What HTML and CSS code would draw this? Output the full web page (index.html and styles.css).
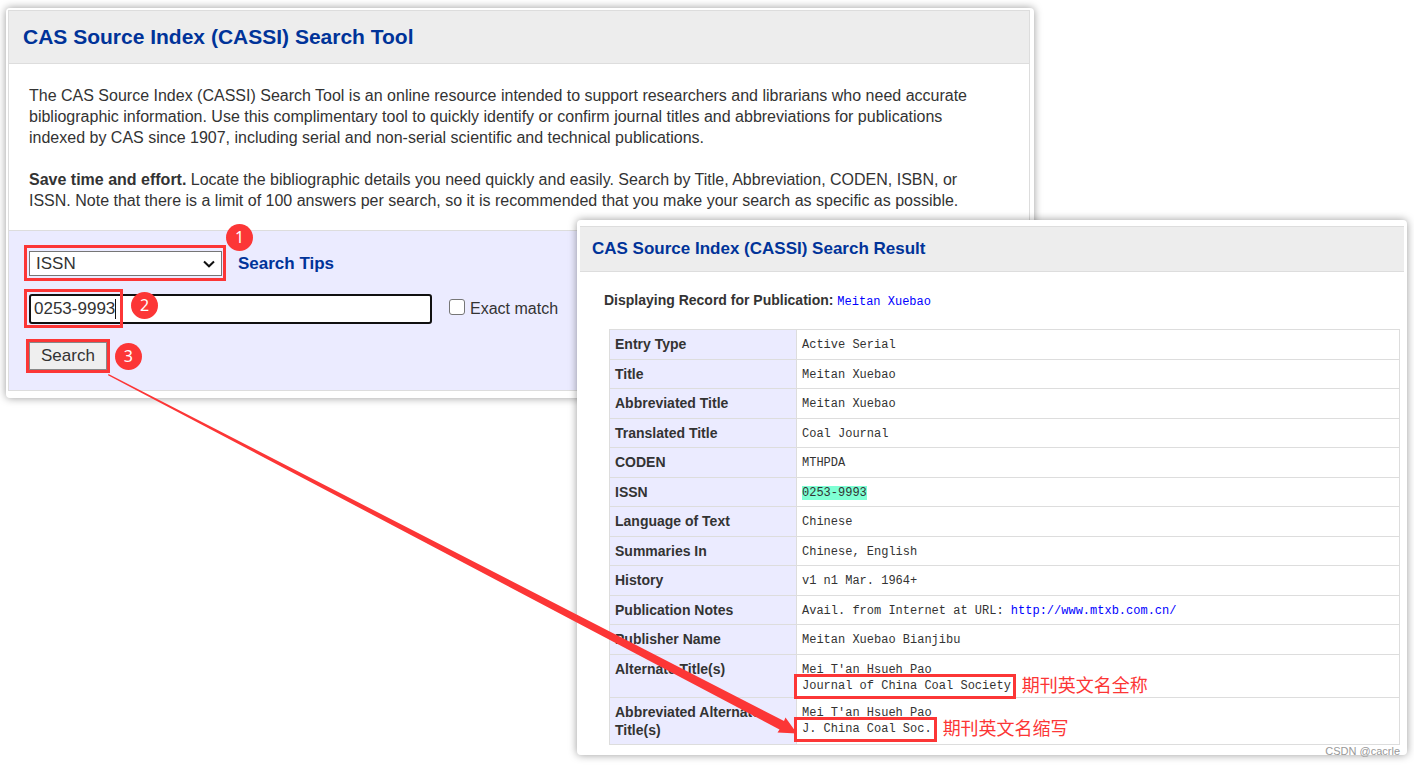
FILE: index.html
```html
<!DOCTYPE html>
<html lang="en">
<head>
<meta charset="utf-8">
<title>CAS Source Index (CASSI)</title>
<link rel="stylesheet" href="styles.css">
</head>
<body>
<main class="stage">
  <section class="window window-search">
    <h1 class="window-title">CAS Source Index (CASSI) Search Tool</h1>
    <div class="intro">
      <p>The CAS Source Index (CASSI) Search Tool is an online resource intended to support researchers and librarians who need accurate<br>
      bibliographic information. Use this complimentary tool to quickly identify or confirm journal titles and abbreviations for publications<br>
      indexed by CAS since 1907, including serial and non-serial scientific and technical publications.</p>
      <p><strong>Save time and effort.</strong> Locate the bibliographic details you need quickly and easily. Search by Title, Abbreviation, CODEN, ISBN, or<br>
      ISSN. Note that there is a limit of 100 answers per search, so it is recommended that you make your search as specific as possible.</p>
    </div>
    <form class="search-form">
      <div class="form-row">
        <div class="marked mark-select">
          <select class="type-select" aria-label="Search type"><option>ISSN</option></select>
          <svg class="chevron" viewBox="0 0 12 8"><path d="M1 1.5 6 6.3 11 1.5"/></svg>
          <span class="badge">1</span>
        </div>
        <a class="tips" href="#">Search Tips</a>
      </div>
      <div class="form-row row-query">
        <div class="marked mark-query">
          <input class="query" type="text" value="0253-9993" aria-label="Search term">
          <span class="caret"></span>
          <span class="badge">2</span>
        </div>
        <label class="exact"><input class="exact-box" type="checkbox">Exact match</label>
      </div>
      <div class="form-row">
        <div class="marked mark-button">
          <button class="search-button" type="button">Search</button>
          <span class="badge">3</span>
        </div>
      </div>
    </form>
  </section>

  <section class="window window-result">
    <h2 class="window-title">CAS Source Index (CASSI) Search Result</h2>
    <div class="result">
      <p class="record"><strong>Displaying Record for Publication:</strong> <a class="mono" href="#">Meitan Xuebao</a></p>
      <table class="details">
        <tr><th scope="row">Entry Type</th><td>Active Serial</td></tr>
        <tr><th scope="row">Title</th><td>Meitan Xuebao</td></tr>
        <tr><th scope="row">Abbreviated Title</th><td>Meitan Xuebao</td></tr>
        <tr><th scope="row">Translated Title</th><td>Coal Journal</td></tr>
        <tr><th scope="row">CODEN</th><td>MTHPDA</td></tr>
        <tr><th scope="row">ISSN</th><td><mark>0253-9993</mark></td></tr>
        <tr><th scope="row">Language of Text</th><td>Chinese</td></tr>
        <tr><th scope="row">Summaries In</th><td>Chinese, English</td></tr>
        <tr><th scope="row">History</th><td>v1 n1 Mar. 1964+</td></tr>
        <tr><th scope="row">Publication Notes</th><td>Avail. from Internet at URL: <a href="#">http://www.mtxb.com.cn/</a></td></tr>
        <tr><th scope="row">Publisher Name</th><td>Meitan Xuebao Bianjibu</td></tr>
        <tr class="tall"><th scope="row">Alternate Title(s)</th><td>Mei T'an Hsueh Pao<div class="note"><span class="boxed">Journal of China Coal Society</span><span class="caption" lang="zh">期刊英文名全称</span></div></td></tr>
        <tr class="tall"><th scope="row">Abbreviated Alternate Title(s)</th><td>Mei T'an Hsueh Pao<div class="note"><span class="boxed">J. China Coal Soc.</span><span class="caption" lang="zh">期刊英文名缩写</span></div></td></tr>
      </table>
    </div>
    <span class="watermark">CSDN @cacrle</span>
  </section>

  <svg class="arrow" width="700" height="370" viewBox="0 0 700 370">
    <path d="M0.5 0 676 347 677.5 343.5 689 359.5 669.5 358.5 671.5 355.5 0 1.2Z"/>
  </svg>
</main>
</body>
</html>
```
FILE: styles.css
```css
*, *::after { box-sizing: border-box; }

body {
  margin: 0;
  background: #fff;
  color: #333;
  font-family: "Liberation Sans", Arial, sans-serif;
}

p, h1, h2 { margin: 0; }

a { color: #00f; text-decoration: none; }

.stage {
  position: relative;
  display: grid;
  grid-template-columns: 571px 457fr 373fr;
  align-items: start;
  padding: 8px 7px 10px 6px;
}

.window {
  position: relative;
  grid-row: 1;
  background: #fff;
  border-radius: 4px;
  box-shadow: 0 0 8px rgba(0, 0, 0, 0.4);
}

.window-search { grid-column: 1 / 3; padding: 2px 4px 7px 2px; }
.window-result { grid-column: 2 / 4; margin-top: 212px; padding: 6px 3px 10px; }

.window-title {
  padding: 0 14px;
  border: 1px solid #ddd;
  background: #ededed;
  color: #039;
  font-size: 21px;
  line-height: 52px;
}

.window-result .window-title {
  padding: 0 12px;
  border-width: 1px 0;
  font-size: 17px;
  line-height: 44px;
}

.intro {
  display: flex;
  flex-direction: column;
  gap: 21px;
  padding: 21px 20px 19px;
  border: solid #ddd;
  border-width: 0 1px;
  font-size: 16px;
  line-height: 21px;
  white-space: nowrap;
}

.search-form {
  display: flex;
  flex-direction: column;
  align-items: flex-start;
  gap: 18px;
  padding: 20px 20px 20px;
  border: 1px solid #ddd;
  background: #ebebff;
  font-size: 17px;
}

.form-row { display: flex; align-items: center; gap: 16px; }
.row-query { gap: 17px; }

.marked { position: relative; display: flex; }

.marked::after,
.boxed::after {
  content: "";
  position: absolute;
  border: 3px solid #fc3636;
  pointer-events: none;
}

.mark-select::after { inset: -6px -4px -5px -5px; }
.mark-query::after { inset: -5px auto -4px -5px; width: 99px; }
.mark-button::after { inset: -3px; }

.type-select {
  width: 193px;
  height: 25px;
  padding: 0 6px;
  border: 1px solid #767676;
  border-radius: 0;
  background: #fff;
  color: #333;
  font: 17px "Liberation Sans", Arial, sans-serif;
  appearance: none;
}

.chevron {
  position: absolute;
  top: 9px;
  right: 7px;
  width: 12px;
  height: 8px;
  fill: none;
  stroke: #111;
  stroke-width: 2;
  pointer-events: none;
}

.tips { color: #039; font-weight: bold; }

.query {
  width: 403px;
  height: 30px;
  padding: 0 3px;
  border: 2px solid #101010;
  border-radius: 3px;
  background: #fff;
  color: #333;
  font: 17px "Liberation Sans", Arial, sans-serif;
}

.caret {
  position: absolute;
  top: 5px;
  left: 86px;
  width: 1px;
  height: 20px;
  background: #111;
}

.exact { display: flex; align-items: center; gap: 5px; font-size: 16px; }

.exact-box {
  width: 16px;
  height: 16px;
  margin: 0 0 5px;
  border: 1px solid #767676;
  border-radius: 3px;
  background: #fff;
  appearance: none;
}

.search-button {
  height: 28px;
  padding: 0 11px;
  border: 1px solid #888;
  background: #efefef;
  color: #333;
  font: 17px "Liberation Sans", Arial, sans-serif;
}

.badge {
  position: absolute;
  width: 27px;
  height: 27px;
  border-radius: 50%;
  background: #fc3636;
  color: #fff;
  font: 16px/26px "Noto Sans", sans-serif;
  text-align: center;
}

.mark-select .badge { top: -27px; left: 197px; }
.mark-query .badge { top: -2px; left: 102px; }
.mark-button .badge { top: 1px; right: -35px; }

.result { padding: 18px 4px 0 24px; }

.record { font-size: 14px; line-height: 20px; }

.mono, .details td {
  font-family: "Liberation Mono", "Courier New", monospace;
  font-size: 12px;
}

.details {
  width: calc(100% - 5px);
  margin: 17px 0 0 5px;
  border-collapse: collapse;
  table-layout: fixed;
}

.details tr { height: 29px; }
.details tr:nth-child(odd) { height: 30px; }
.details .tall:nth-child(12) { height: 43px; }
.details .tall:nth-child(13) { height: 47px; }

.details th,
.details td {
  padding: 5px;
  border: 1px solid #ddd;
  text-align: left;
  vertical-align: top;
}

.details th {
  width: 187px;
  background: #ebebff;
  font-size: 14px;
  line-height: 18px;
}

.details td { padding: 7px 5px 3px; line-height: 16px; }

mark { background: #7fffd4; color: inherit; }

.note { display: flex; align-items: flex-start; gap: 11px; height: 16px; }

.boxed { position: relative; }
.boxed::after { inset: -4px -5px -5px -8px; }

.caption {
  color: #fc3636;
  font: 18px/12px "Noto Sans CJK SC", sans-serif;
}

.watermark {
  position: absolute;
  right: 7px;
  bottom: -3px;
  color: #999;
  font-size: 11px;
  line-height: 14px;
}

.arrow {
  position: absolute;
  top: 374px;
  left: 108px;
  fill: #fc3636;
  pointer-events: none;
}
```
